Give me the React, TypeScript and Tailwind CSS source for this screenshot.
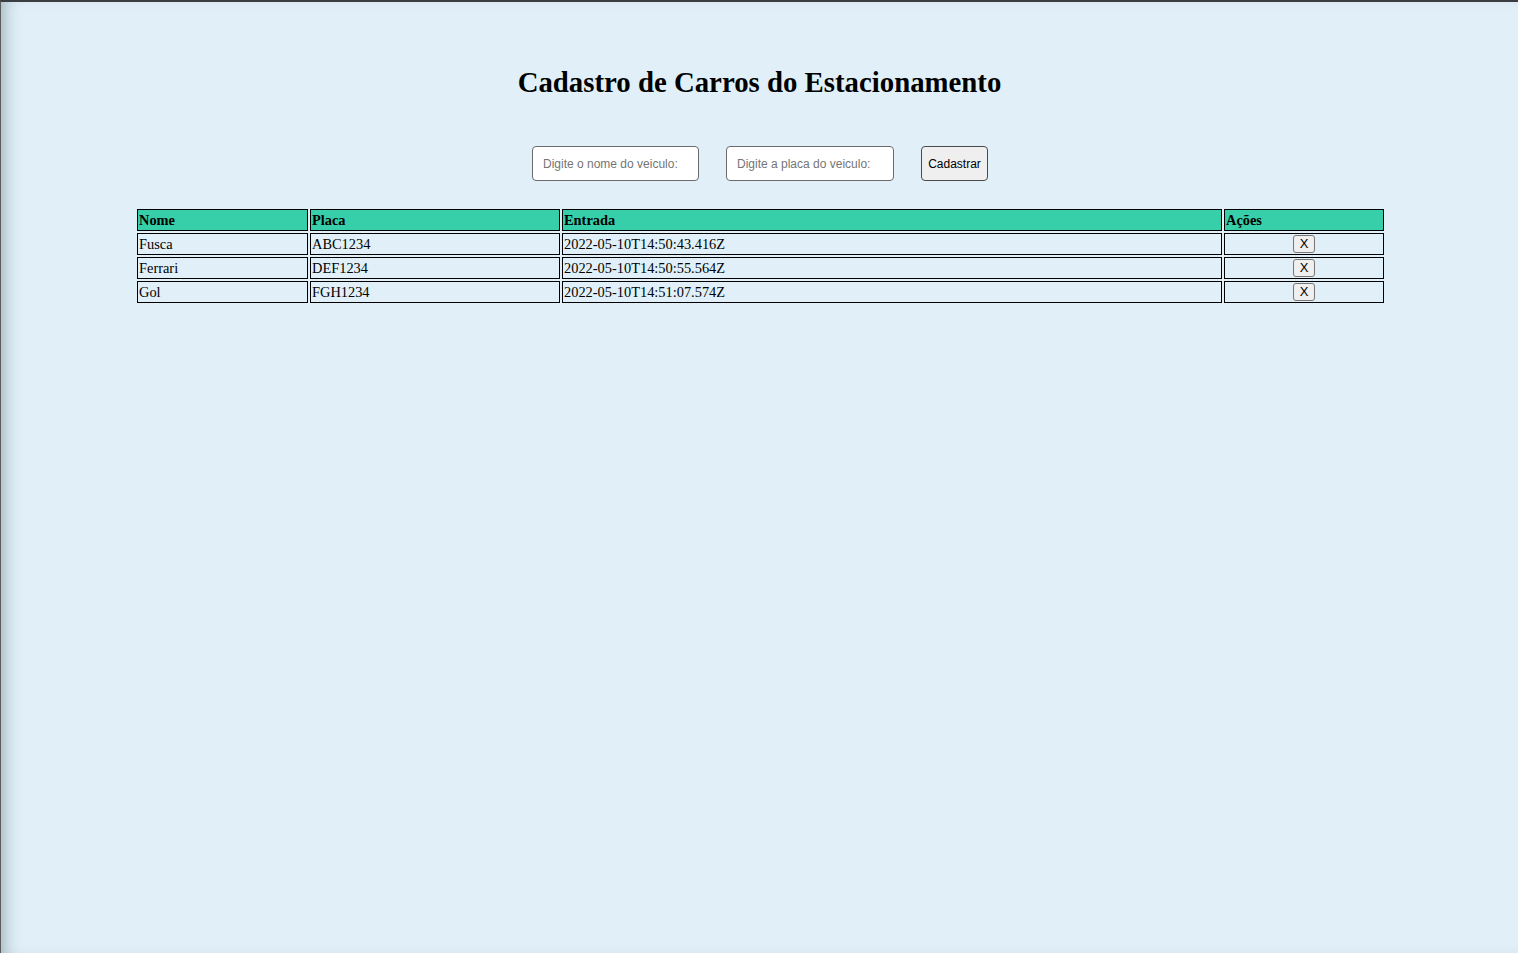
import { useState } from 'react'

type Carro = {
  nome: string
  placa: string
  entrada: string
}

const iniciais: Carro[] = [
  { nome: 'Fusca', placa: 'ABC1234', entrada: '2022-05-10T14:50:43.416Z' },
  { nome: 'Ferrari', placa: 'DEF1234', entrada: '2022-05-10T14:50:55.564Z' },
  { nome: 'Gol', placa: 'FGH1234', entrada: '2022-05-10T14:51:07.574Z' },
]

export default function App() {
  const [carros, setCarros] = useState<Carro[]>(iniciais)
  const [nome, setNome] = useState('')
  const [placa, setPlaca] = useState('')

  const cadastrar = () => {
    if (!nome || !placa) return
    setCarros([...carros, { nome, placa, entrada: new Date().toISOString() }])
    setNome('')
    setPlaca('')
  }

  const remover = (i: number) => {
    setCarros(carros.filter((_, idx) => idx !== i))
  }

  return (
    <div className="min-h-screen bg-[#e1f0f8] border-t-2 border-t-[#3b3d40] border-l border-l-[#5c5c5c] shadow-[inset_14px_0_18px_-12px_rgba(60,80,95,0.45)] font-['Liberation_Serif',serif] text-black">
      <h1 className="pt-[62px] text-center text-[28.8px] leading-[37px] font-bold">
        Cadastro de Carros do Estacionamento
      </h1>

      <div className="mt-[45px] flex justify-center gap-[27px] pl-[1px] font-['Liberation_Sans',Arial,sans-serif] text-[12px]">
        <input
          value={nome}
          onChange={(e) => setNome(e.target.value)}
          placeholder="Digite o nome do veiculo:"
          className="w-[167px] h-[35px] rounded-[4px] border border-[#6b6b6b] bg-white px-[10px] placeholder:text-[#757575] outline-none"
        />
        <input
          value={placa}
          onChange={(e) => setPlaca(e.target.value)}
          placeholder="Digite a placa do veiculo:"
          className="w-[168px] h-[35px] rounded-[4px] border border-[#6b6b6b] bg-white px-[10px] placeholder:text-[#757575] outline-none"
        />
        <button
          onClick={cadastrar}
          className="w-[67px] h-[35px] rounded-[4px] border border-[#4a4a4a] bg-[#efefef] text-black"
        >
          Cadastrar
        </button>
      </div>

      <table className="ml-[134px] mt-[26px] table-fixed border-separate border-spacing-[2px] w-[1251px] text-[14.4px] leading-[18px]">
        <colgroup>
          <col className="w-[171px]" />
          <col className="w-[250px]" />
          <col className="w-[660px]" />
          <col className="w-[160px]" />
        </colgroup>
        <thead>
          <tr className="bg-[#37cfa9]">
            <th className="border border-black p-[1px] text-left font-bold">Nome</th>
            <th className="border border-black p-[1px] text-left font-bold">Placa</th>
            <th className="border border-black p-[1px] text-left font-bold">Entrada</th>
            <th className="border border-black p-[1px] text-left font-bold">Ações</th>
          </tr>
        </thead>
        <tbody>
          {carros.map((c, i) => (
            <tr key={i}>
              <td className="border border-black p-[1px]">{c.nome}</td>
              <td className="border border-black p-[1px]">{c.placa}</td>
              <td className="border border-black p-[1px]">{c.entrada}</td>
              <td className="border border-black p-[1px] text-center">
                <button
                  onClick={() => remover(i)}
                  className="h-[18px] px-[6px] rounded-[3px] border border-[#767676] bg-[#efefef] font-['Liberation_Sans',Arial,sans-serif] text-[13px] leading-[16px] align-top"
                >
                  X
                </button>
              </td>
            </tr>
          ))}
        </tbody>
      </table>
    </div>
  )
}
